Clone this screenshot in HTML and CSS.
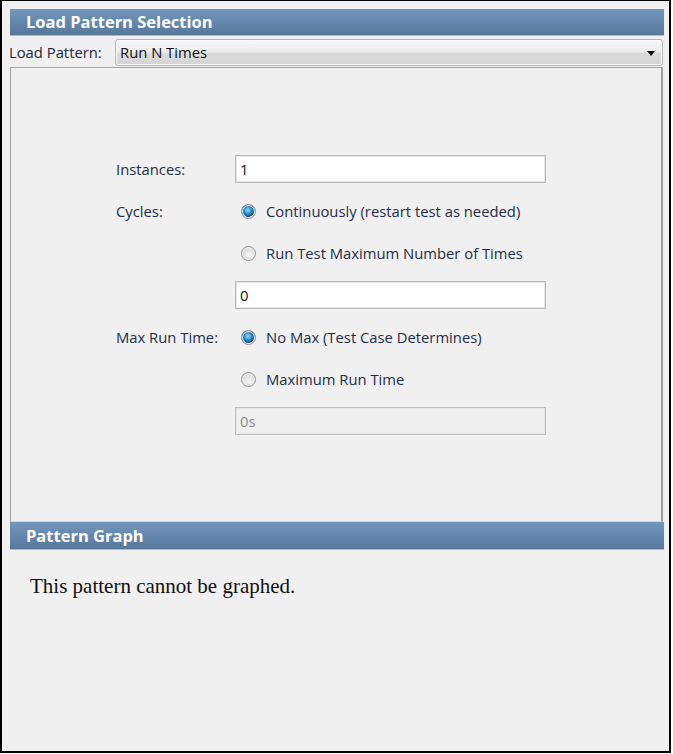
FILE: index.html
```html
<!DOCTYPE html>
<html>
<head>
<meta charset="utf-8">
<link rel="stylesheet" href="styles.css">
</head>
<body>
<div class="frame">
  <div class="bar">Load Pattern Selection</div>
  <div class="pattern-row">
    <span class="pattern-label">Load Pattern:</span>
    <div class="combo">
      <span class="combo-text">Run N Times</span>
      <span class="combo-arrow"></span>
    </div>
  </div>
  <div class="panel">
    <div class="form">
      <div class="label">Instances:</div>
      <div class="input">1</div>

      <div class="label">Cycles:</div>
      <div class="radio-row"><span class="radio checked"></span><span>Continuously (restart test as needed)</span></div>

      <div class="label"></div>
      <div class="radio-row"><span class="radio"></span><span>Run Test Maximum Number of Times</span></div>

      <div class="label"></div>
      <div class="input">0</div>

      <div class="label">Max Run Time:</div>
      <div class="radio-row"><span class="radio checked"></span><span>No Max (Test Case Determines)</span></div>

      <div class="label"></div>
      <div class="radio-row"><span class="radio"></span><span>Maximum Run Time</span></div>

      <div class="label"></div>
      <div class="input disabled">0s</div>
    </div>
  </div>
  <div class="bar bar-graph">Pattern Graph</div>
  <p class="graph-msg">This pattern cannot be graphed.</p>
</div>
</body>
</html>
```
FILE: styles.css
```css
html, body {
  margin: 0;
  padding: 0;
  background: #ffffff;
}

.frame {
  box-sizing: border-box;
  width: 671px;
  height: 753px;
  border: 2px solid #000000;
  border-top-width: 1px;
  background: #f0f0f0;
  padding: 8px 5px 0 8px;
  font-family: "Open Sans", "Liberation Sans", Arial, sans-serif;
  font-size: 14.8px;
  color: #1f2a40;
}

.bar {
  box-sizing: border-box;
  height: 27px;
  background: linear-gradient(to bottom, #7197bc 0%, #6587ad 50%, #56789a 100%);
  border-bottom: 1px solid #a9bccf;
  color: #ffffff;
  font-weight: 700;
  font-size: 16.5px;
  line-height: 26px;
  padding-left: 16px;
}

.bar-graph {
  height: 28px;
  line-height: 28px;
}

.pattern-row {
  display: flex;
  align-items: center;
  height: 31px;
  margin-left: -1px;
}

.pattern-label {
  width: 106px;
  flex: none;
  color: #1b2540;
}

.combo {
  box-sizing: border-box;
  width: 548px;
  height: 27px;
  margin-top: 1px;
  border: 1px solid #b4b4b4;
  border-radius: 3px;
  background: linear-gradient(to bottom, #f6f6f6 0%, #ededed 48%, #dcdcdc 52%, #d4d4d4 100%);
  display: flex;
  align-items: center;
  justify-content: space-between;
  padding: 0 7px 0 4px;
  box-shadow: inset 0 0 0 1px #fbfbfb;
}

.combo-text {
  color: #111111;
  margin-top: -1px;
}

.combo-arrow {
  width: 0;
  height: 0;
  border-left: 4.5px solid transparent;
  border-right: 4.5px solid transparent;
  border-top: 5px solid #000000;
  margin-top: 2px;
}

.panel {
  box-sizing: border-box;
  width: 653px;
  height: 455px;
  border: 1px solid #a5a5a5;
  border-right: 2px solid #a0a0a0;
  border-bottom: 1px solid #d6d6d6;
  padding: 87px 0 0 105px;
}

.form {
  display: grid;
  grid-template-columns: 119px 311px;
  grid-auto-rows: 28px;
  row-gap: 14px;
}

.label {
  display: flex;
  align-items: center;
  color: #1f2d48;
}

.input {
  box-sizing: border-box;
  height: 28px;
  border: 1px solid #b9b9be;
  box-shadow: inset 0 0 0 1px #e4e4e8;
  background: #ffffff;
  display: flex;
  align-items: center;
  padding-left: 4px;
  color: #111111;
}

.input.disabled {
  background: #f0f0f0;
  color: #8a8a8a;
  border-color: #bcbcbc;
  box-shadow: inset 0 0 0 1px #e6e6e6;
}

.radio-row {
  display: flex;
  align-items: center;
  padding-left: 6px;
  gap: 10px;
  color: #1f2d48;
}

.radio {
  box-sizing: border-box;
  width: 15px;
  height: 15px;
  flex: none;
  border-radius: 50%;
  border: 1px solid #8e8f8f;
  background: radial-gradient(circle at 55% 60%, #f4f4f4 0%, #e2e2e2 45%, #cfcfcf 100%);
  box-shadow: inset 0 0 0 1px #f8f8f8;
}

.radio.checked {
  background:
    radial-gradient(circle at 45% 40%, #9fd6f6 0%, #2b8fd0 35%, #0d4f8a 62%, transparent 66%),
    radial-gradient(circle, #f4f4f4 0%, #dcdcdc 100%);
  background-size: 100% 100%;
}

.graph-msg {
  margin: 24px 0 0 20px;
  font-family: "Liberation Serif", "Times New Roman", serif;
  font-size: 21px;
  color: #111111;
}
```
